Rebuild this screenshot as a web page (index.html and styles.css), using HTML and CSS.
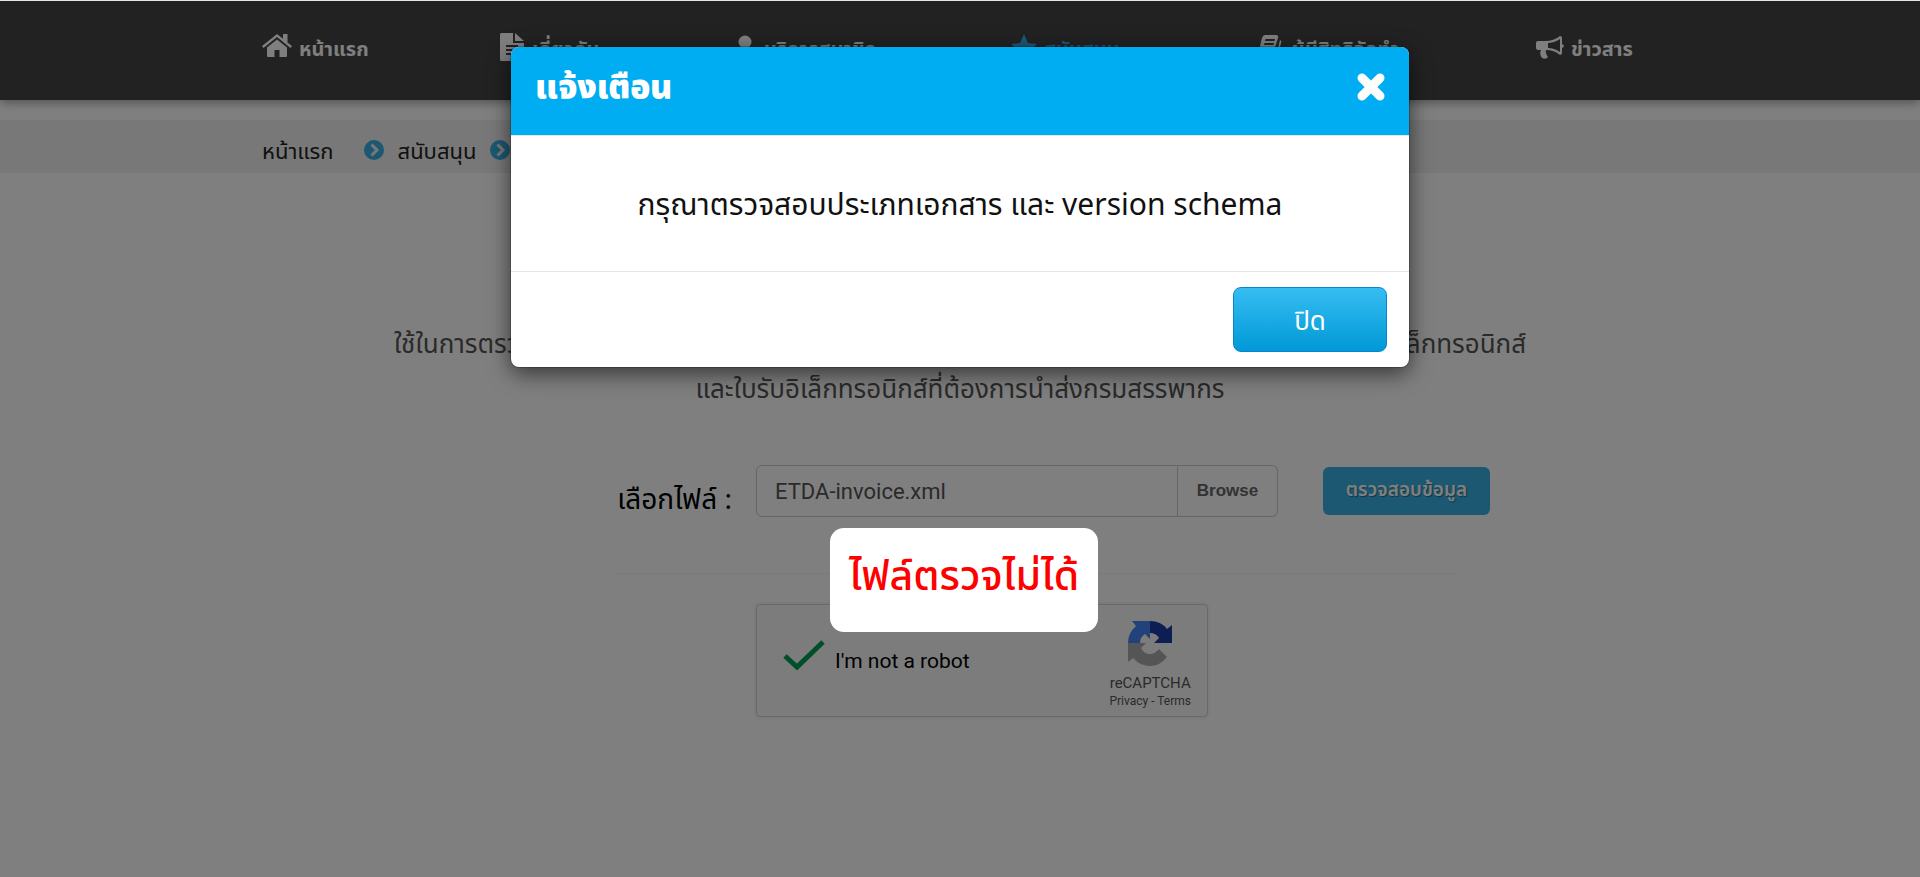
FILE: index.html
```html
<!DOCTYPE html>
<html lang="th">
<head>
    <meta charset="UTF-8">
    <meta name="viewport" content="width=device-width, initial-scale=1.0">
    <title>ตรวจสอบข้อมูล</title>
    <link rel="stylesheet" href="styles.css">
</head>
<body>
    <header class="navbar">
        <nav class="nav-menu">
            <a class="nav-link" href="#">
                <svg class="nav-icon" viewBox="0 0 30 28"><path d="M15 6.500 L5 14.500 V23 Q5 24 6 24 H12.500 V17 H17.500 V24 H24 Q25 24 25 23 V14.500 Z"/><path d="M15 1 L0 13 L1.500 15 L15 4 L28.500 15 L30 13 L25.500 9.400 V1 H21 V5.700 Z"/></svg>
                หน้าแรก
            </a>
            <a class="nav-link" href="#">
                <svg class="nav-icon" viewBox="0 0 26 28"><path fill-rule="evenodd" d="M2 0 H14 V10 H25 V26 Q25 28 23 28 H2 Q1 28 1 26 V2 Q1 0 2 0 Z M7 12 V14 H19 V12 Z M7 16 V18 H19 V16 Z M7 20 V22 H19 V20 Z"/><path d="M16 0 L25 8 H16 Z"/></svg>
                เกี่ยวกับ
            </a>
            <a class="nav-link" href="#">
                <svg class="nav-icon" viewBox="0 0 20 28"><circle cx="8" cy="9" r="6.500"/><path d="M3 14 Q8 18 13 14 Q17 16 17 22 Q17 26 13 26 H3 Q-1 26 -1 22 Q-1 16 3 14 Z"/></svg>
                บริการสมาชิก
            </a>
            <a class="nav-link active" href="#">
                <svg class="nav-icon" viewBox="0 0 26 28"><path d="M13 1 L17 10 L26 11 L19 17 L21 26 L13 21 L5 26 L7 17 L0 11 L9 10 Z"/></svg>
                สนับสนุน
            </a>
            <a class="nav-link" href="#">
                <svg class="nav-icon" viewBox="0 0 26 28"><path fill-rule="evenodd" d="M7 2 H18 Q21 2 20 5 L15 21 Q14 23 12 23 H3 Q1 23 2 24 Q2 25 4 25 H16 Q18 25 18 23 L22 7 Q24 8 23 10 L19 25 Q18 27 16 27 H3 Q-1 27 0 21 L4 5 Q5 2 7 2 Z M7.500 6 L7 8 H16.500 L17 6 Z M6.500 10 L6 12 H15.500 L16 10 Z"/></svg>
                ผู้มีสิทธิจัดทำ
            </a>
            <a class="nav-link" href="#">
                <svg class="nav-icon" viewBox="0 0 28 28"><path fill-rule="evenodd" d="M24 3 Q26 3 26 5 V11 Q28 12 28 13 Q28 14 26 15 V20 Q26 22 24 22 Q18 17 10 17 Q9 20 12 24 Q10 27 6 25 Q3 21 5 17 H2 Q0 17 0 15 V10 Q0 8 2 8 H9 Q18 8 24 3 Z M24 6 Q18 10 12 10 V15 Q18 15 24 19 Z"/></svg>
                ข่าวสาร
            </a>
        </nav>
    </header>

    <div class="breadcrumb-bar">
        <nav class="breadcrumb">
            <a href="#">หน้าแรก</a>
            <svg class="crumb-icon first" viewBox="0 0 20 20"><circle cx="10" cy="10" r="10"/><path d="M7.500 4.500 L13 10 L7.500 15.500"/></svg>
            <a href="#">สนับสนุน</a>
            <svg class="crumb-icon" viewBox="0 0 20 20"><circle cx="10" cy="10" r="10"/><path d="M7.500 4.500 L13 10 L7.500 15.500"/></svg>
        </nav>
    </div>

    <main class="content">
        <p class="intro">ใช้ในการตรวจสอบความถูกต้องของโครงสร้างข้อมูลไฟล์เอกสาร (XML Schema) ของใบกำกับภาษีอิเล็กทรอนิกส์<br>และใบรับอิเล็กทรอนิกส์ที่ต้องการนำส่งกรมสรรพากร</p>

        <form class="check-form">
            <div class="form-row">
                <label class="form-label" for="fileName">เลือกไฟล์ :</label>
                <div class="file-group">
                    <input type="text" class="file-name" id="fileName" value="ETDA-invoice.xml">
                    <button type="button" class="browse-btn">Browse</button>
                </div>
                <button type="button" class="check-btn">ตรวจสอบข้อมูล</button>
            </div>
            <hr class="divider">
            <div class="captcha">
                <svg class="captcha-check" viewBox="0 0 42 32"><path d="M2 17 L14 28 L40 3"/></svg>
                <span class="captcha-text">I'm not a robot</span>
                <div class="captcha-brand">
                    <svg class="captcha-logo" viewBox="0 0 44 45">
                        <path fill="#1c3aa9" d="M22 0 Q33 0 39 8 L44 4 V22 H26 L31 17 Q28 12 22 12 Z"/>
                        <path fill="#4285f4" d="M22 0 V18 L17 13 Q12 16 12 22 H0 Q0 12 8 5 L4 0 Z"/>
                        <path fill="#ababab" d="M0 22 H18 L13 27 Q16 33 22 33 Q27 33 31 28 L39 36 Q32 45 22 45 Q12 45 5 37 L0 41 Z"/>
                    </svg>
                    <span class="captcha-name">reCAPTCHA</span>
                    <span class="captcha-links"><a href="#">Privacy</a> - <a href="#">Terms</a></span>
                </div>
            </div>
        </form>
    </main>

    <div class="backdrop"></div>

    <div class="modal" role="dialog" aria-labelledby="modalTitle">
        <div class="modal-header">
            <h4 class="modal-title" id="modalTitle">แจ้งเตือน</h4>
            <button type="button" class="close-btn" aria-label="ปิด">
                <svg viewBox="0 0 28 28"><path d="M5 5 L23 23 M23 5 L5 23"/></svg>
            </button>
        </div>
        <div class="modal-body">กรุณาตรวจสอบประเภทเอกสาร และ version schema</div>
        <div class="modal-footer">
            <button type="button" class="ok-btn">ปิด</button>
        </div>
    </div>

    <div class="note">ไฟล์ตรวจไม่ได้</div>
</body>
</html>
```
FILE: styles.css
```css
* {
    margin: 0;
    padding: 0;
    box-sizing: border-box;
}

body {
    font-family: "Noto Sans", "Noto Sans Thai", sans-serif;
    background: #fff;
    color: #222;
    min-height: 100vh;
    overflow: hidden;
    border-top: 1px solid #e6e6e6;
}

a {
    color: inherit;
    text-decoration: none;
}

button {
    font-family: inherit;
    cursor: pointer;
}

/* Top menu */
.navbar {
    background: #444;
    height: 99px;
    padding: 0 262px;
    position: relative;
    box-shadow: 0 2px 10px rgba(0,0,0,0.4);
}

.nav-menu {
    display: grid;
    grid-template-columns: 237fr 238fr 274fr 247fr 278fr 122fr;
    padding-top: 32px;
}

.nav-link {
    display: flex;
    align-items: flex-start;
    gap: 7px;
    color: #fff;
    font-size: 20px;
    line-height: 32px;
    font-weight: 700;
    white-space: nowrap;
}

.nav-link.active {
    color: #38b0e4;
}

.nav-icon {
    height: 28px;
    fill: currentColor;
}

/* Breadcrumb */
.breadcrumb-bar {
    margin-top: 20px;
    background: #f0f0f0;
    padding: 0 262px;
}

.breadcrumb {
    display: flex;
    align-items: center;
    height: 53px;
    gap: 14px;
    font-size: 22px;
    line-height: 28px;
    padding-top: 6px;
}

.crumb-icon {
    width: 20px;
    height: 20px;
}

.crumb-icon.first {
    margin-left: 16px;
}

.crumb-icon circle {
    fill: #38b0e4;
}

.crumb-icon path {
    fill: none;
    stroke: #f0f0f0;
    stroke-width: 3;
}

/* Form */
.content {
    padding-top: 148px;
}

.intro {
    text-align: center;
    font-size: 26px;
    line-height: 45px;
    color: #555;
    white-space: nowrap;
}

.check-form {
    width: 1134px;
    max-width: 100%;
    margin: 54px auto 0;
}

.form-row {
    display: flex;
    align-items: center;
    height: 52px;
}

.form-label {
    width: 363px;
    padding-right: 24px;
    padding-top: 18px;
    text-align: right;
    font-size: 28px;
    color: #000;
}

.file-group {
    display: flex;
    width: 522px;
    height: 52px;
}

.file-name {
    flex: 1;
    min-width: 0;
    padding: 0 18px;
    border: 1px solid #ccc;
    border-radius: 6px 0 0 6px;
    background: #fff;
    color: #555;
    font-family: Roboto, sans-serif;
    font-size: 22px;
}

.browse-btn {
    width: 100px;
    border: 1px solid #ccc;
    border-left: none;
    border-radius: 0 6px 6px 0;
    background: #fff;
    color: #666;
    font-family: "Liberation Sans", sans-serif;
    font-size: 17px;
    font-weight: bold;
}

.check-btn {
    width: 167px;
    height: 48px;
    margin-left: 45px;
    padding-bottom: 2px;
    border: none;
    border-radius: 6px;
    background: #38b0e4;
    color: #fff;
    font-size: 19px;
    font-weight: 600;
    white-space: nowrap;
    text-shadow: 1px 1px 1px rgba(0,0,0,0.4);
}

.divider {
    margin: 56px 70px 0 221px;
    border: none;
    border-top: 1px solid #f5f5f5;
}

.captcha {
    display: flex;
    align-items: center;
    width: 452px;
    height: 113px;
    margin: 30px 0 0 363px;
    padding: 0 16px 0 26px;
    border: 1px solid #d3d3d3;
    border-radius: 4px;
    background: #f9f9f9;
    box-shadow: 0 0 4px rgba(0,0,0,0.1);
    font-family: Roboto, sans-serif;
}

.captcha-check {
    width: 42px;
    height: 32px;
    margin-bottom: 12px;
}

.captcha-check path {
    fill: none;
    stroke: #009e55;
    stroke-width: 5;
}

.captcha-text {
    flex: 1;
    margin-left: 10px;
    font-size: 21px;
    color: #000;
}

.captcha-brand {
    display: flex;
    flex-direction: column;
    align-items: center;
    padding-top: 9px;
    color: #555;
}

.captcha-logo {
    width: 44px;
    height: 45px;
}

.captcha-name {
    margin-top: 8px;
    font-size: 15px;
    line-height: 18px;
}

.captcha-links {
    font-size: 12px;
    line-height: 18px;
}

/* Modal */
.backdrop {
    position: absolute;
    top: 1px;
    right: 0;
    bottom: 0;
    left: 0;
    background: rgba(0,0,0,0.5);
}

.modal {
    position: absolute;
    top: 47px;
    left: 50%;
    width: 898px;
    margin-left: -449px;
    border-radius: 8px;
    background: #fff;
    box-shadow: 0 0 0 1px rgba(0,0,0,0.2), 0 6px 22px rgba(0,0,0,0.6);
    overflow: hidden;
}

.modal-header {
    display: flex;
    justify-content: space-between;
    align-items: center;
    height: 89px;
    padding: 0 24px 8px;
    background: #00adf2;
    border-bottom: 1px solid #e5e5e5;
}

.modal-title {
    font-size: 33px;
    line-height: 40px;
    font-weight: 900;
    color: #fff;
}

.close-btn {
    width: 28px;
    height: 28px;
    border: none;
    background: none;
}

.close-btn path {
    fill: none;
    stroke: #fff;
    stroke-width: 9;
    stroke-linecap: round;
}

.modal-body {
    padding: 46px 24px;
    text-align: center;
    font-size: 30px;
    line-height: 43px;
    color: #111;
}

.modal-footer {
    display: flex;
    justify-content: flex-end;
    padding: 15px 22px;
    border-top: 1px solid #e5e5e5;
}

.ok-btn {
    width: 154px;
    height: 65px;
    padding-top: 4px;
    border: 1px solid #0a84d0;
    border-radius: 8px;
    background: linear-gradient(#36bdf2, #0099d6);
    color: #fff;
    font-size: 26px;
}

/* Note over the form */
.note {
    position: absolute;
    top: 528px;
    left: 50%;
    width: 268px;
    height: 104px;
    margin-left: -130px;
    padding-top: 16px;
    border-radius: 14px;
    background: #fff;
    color: #f00;
    text-align: center;
    font-size: 41px;
    line-height: 60px;
    font-weight: 500;
    white-space: nowrap;
}
```
